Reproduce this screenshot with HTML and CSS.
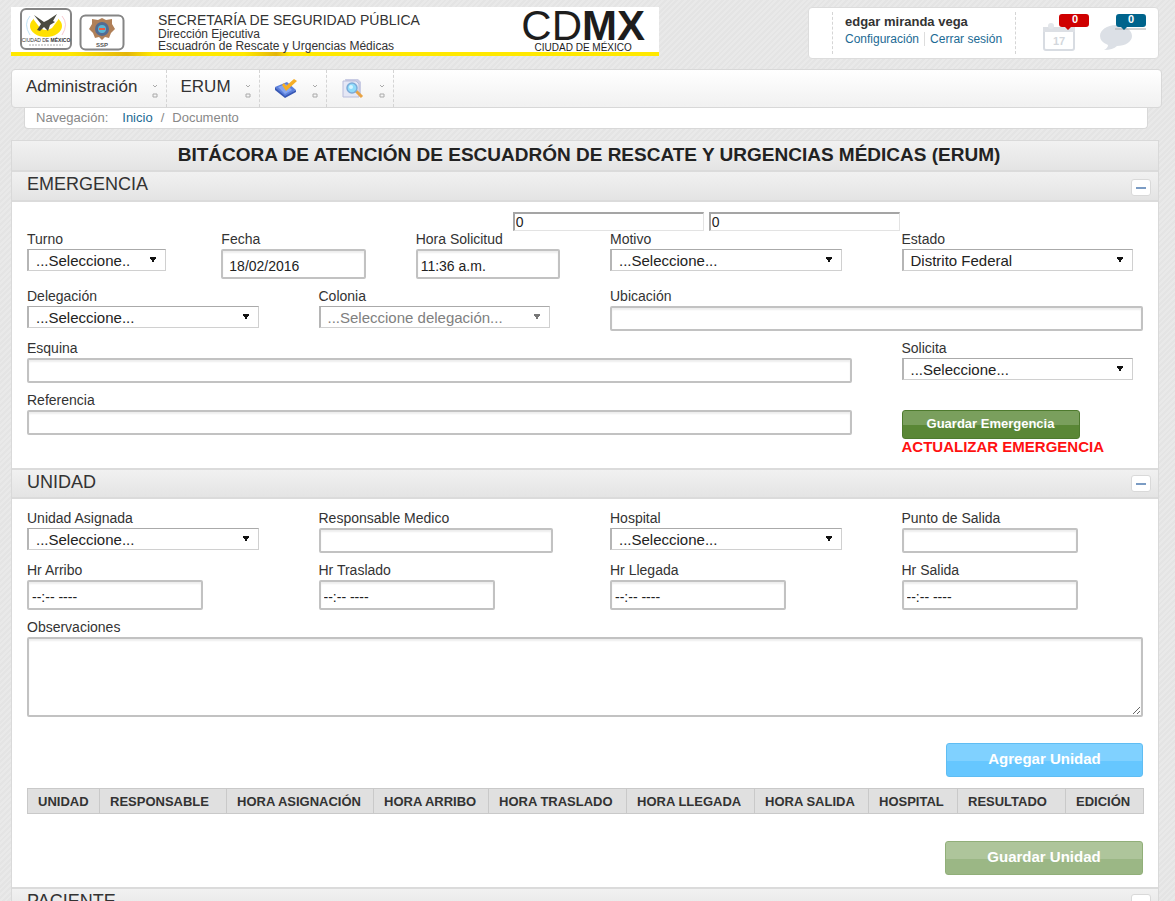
FILE: index.html
```html
<!DOCTYPE html>
<html lang="es">
<head>
<meta charset="utf-8">
<title>Bitácora de Atención ERUM</title>
<link rel="stylesheet" href="styles.css">
</head>
<body>
<header class="top">
  <div class="banner">
    <svg class="crest crest-city" viewBox="0 0 54 44" aria-hidden="true">
      <rect x="2" y="2" width="50" height="40" rx="5" fill="#fff" stroke="#858585" stroke-width="2"/>
      <path d="M11 9q-7 8 0 19" fill="none" stroke="#bfe2f5"/><path d="M43 9q7 8 0 19" fill="none" stroke="#f8c9cf"/>
      <ellipse cx="27" cy="19" rx="16" ry="11" fill="#ffe000"/>
      <path d="M15 6h24v7l-6 8q-6 4-12 0l-6-8z" fill="#fff"/>
      <path d="M15 8l10 7 4-2 9-6-4 7 2 1-5 3-2 6-4-4-4 4-3-1 4-6z" fill="#4a4a40"/>
      <text x="27" y="35" class="crest-caption">CIUDAD DE <tspan font-weight="bold">MÉXICO</tspan></text>
      <path d="M10 38h34" stroke="#aaa" stroke-dasharray="2 1"/>
    </svg>
    <svg class="crest crest-ssp" viewBox="0 0 46 37" aria-hidden="true">
      <rect x="1.500" y="1.500" width="43" height="34" rx="5" fill="#fff" stroke="#858585" stroke-width="2"/>
      <path d="M23 4l4 2 6-1v5l3 5-4 4-2 5-4-1-3 3-3-3-4 1-2-5-4-4 3-5V5l6 1z" fill="#b08058"/>
      <circle cx="23" cy="15" r="7" fill="#536b91"/><circle cx="23" cy="15" r="4" fill="#57b6d5"/><path d="M20 15h6" stroke="#e85b42" stroke-width="2"/>
      <text x="23" y="33" class="crest-ssp-caption">SSP</text>
    </svg>
    <div class="agency">
      <p class="agency-name">SECRETARÍA DE SEGURIDAD PÚBLICA</p>
      <p>Dirección Ejecutiva</p>
      <p>Escuadrón de Rescate y Urgencias Médicas</p>
    </div>
    <div class="cdmx"><span class="cdmx-big">CD<b>MX</b></span><span class="cdmx-small">CIUDAD DE MÉXICO</span></div>
  </div>
  <div class="user">
    <div class="user-info">
      <strong>edgar miranda vega</strong>
      <nav class="user-links" aria-label="Cuenta"><a href="#">Configuración</a><a href="#">Cerrar sesión</a></nav>
    </div>
    <div class="user-icons">
      <button class="alert" type="button" aria-label="Calendario">
        <svg viewBox="0 0 50 40" aria-hidden="true">
          <rect x="4" y="16" width="30" height="22" rx="2" fill="#fff" stroke="#d8dce2" stroke-width="2"/><path d="M3 15h32v5H3z" fill="#dde0e5"/><circle cx="11" cy="14" r="3" fill="#e3e6ea"/><circle cx="27" cy="14" r="3" fill="#e3e6ea"/>
          <text x="19" y="33" class="cal-day">17</text>
          <path d="M22 2h24q3 0 3 3v7q0 3-3 3H31l-3 3-3-3h-3q-3 0-3-3V5q0-3 3-3z" fill="#cf0000"/><text x="35" y="11" class="badge">0</text>
        </svg>
      </button>
      <button class="alert" type="button" aria-label="Mensajes">
        <svg viewBox="0 0 50 40" aria-hidden="true">
          <path d="M18 13c9 0 16 5 16 11s-7 10-15 10q-4 4-13 4 4-2 4-5-8-3-8-9c0-6 7-11 16-11z" fill="#dce0e6"/>
          <path d="M17 17h31" stroke="#aaa"/><path d="M21 2h24q3 0 3 3v7q0 3-3 3H29l-3 3-3-3h-2q-3 0-3-3V5q0-3 3-3z" fill="#00648c"/><text x="33" y="11" class="badge">0</text>
        </svg>
      </button>
    </div>
  </div>
</header>

<nav class="menu" aria-label="Principal">
  <a class="menu-item" href="#"><span>Administración</span><svg class="caret" viewBox="0 0 8 18" aria-hidden="true"><path d="M2 4l2 2 2-2M2 13h4v3H2z"/></svg></a>
  <a class="menu-item" href="#"><span>ERUM</span><svg class="caret" viewBox="0 0 8 18" aria-hidden="true"><path d="M2 4l2 2 2-2M2 13h4v3H2z"/></svg></a>
  <a class="menu-item" href="#" aria-label="Capturar">
    <svg class="menu-icon" viewBox="0 0 24 22" aria-hidden="true"><path d="M1 10l12-5 9 8-11 7z" fill="#5b7fdc"/><path d="M1 10v3l10 8 11-6v-2l-11 6z" fill="#3657b4"/><path d="M4 10l8-3 6 6-7 4z" fill="#86a6f0"/><path d="M8 8l4 6L23 4l-3-2-8 7-2-3z" fill="#f6ae25"/></svg>
    <svg class="caret" viewBox="0 0 8 18" aria-hidden="true"><path d="M2 4l2 2 2-2M2 13h4v3H2z"/></svg></a>
  <a class="menu-item" href="#" aria-label="Consultar">
    <svg class="menu-icon" viewBox="0 0 24 22" aria-hidden="true"><path d="M4 2h13l3 3v14H7z" fill="#c9cce4"/><path d="M2 4h13l3 3v13H2z" fill="#e5e7f5" stroke="#b9bddb"/><path d="M15 14l6 6" stroke="#e8a345" stroke-width="3"/><circle cx="11" cy="11" r="5" fill="#8fdcfb" stroke="#7cabd8" stroke-width="1.500"/><circle cx="10" cy="10" r="2" fill="#d5f5ff"/></svg>
    <svg class="caret" viewBox="0 0 8 18" aria-hidden="true"><path d="M2 4l2 2 2-2M2 13h4v3H2z"/></svg></a>
</nav>
<nav class="crumbs" aria-label="Navegación"><span>Navegación:</span><a href="#">Inicio</a><span class="slash">/</span><span>Documento</span></nav>

<main class="panel">
  <h1 class="bar title">BITÁCORA DE ATENCIÓN DE ESCUADRÓN DE RESCATE Y URGENCIAS MÉDICAS (ERUM)</h1>

  <section>
    <div class="bar"><h2>EMERGENCIA</h2><button class="toggle" type="button" aria-label="Contraer emergencia"></button></div>
    <form class="body emergency">
      <div class="grid">
        <div class="counters"><input aria-label="Latitud" value="0"><input aria-label="Longitud" value="0"></div>
      </div>
      <div class="grid">
        <div class="field s2"><label for="turno">Turno</label><select id="turno"><option>...Seleccione..</option></select></div>
        <div class="field s2"><label for="fecha">Fecha</label><input class="tall" id="fecha" value="18/02/2016"></div>
        <div class="field s2"><label for="hora">Hora Solicitud</label><input class="tall time" id="hora" value="11:36 a.m."></div>
        <div class="field s3"><label for="motivo">Motivo</label><select id="motivo"><option>...Seleccione...</option></select></div>
        <div class="field s3"><label for="estado">Estado</label><select id="estado"><option>Distrito Federal</option></select></div>
        <div class="field s3"><label for="deleg">Delegación</label><select id="deleg"><option>...Seleccione...</option></select></div>
        <div class="field s3"><label for="colonia">Colonia</label><select id="colonia" disabled><option>...Seleccione delegación...</option></select></div>
        <div class="field s6"><label for="ubic">Ubicación</label><input id="ubic"></div>
        <div class="field s9"><label for="esquina">Esquina</label><input id="esquina"></div>
        <div class="field s3"><label for="solicita">Solicita</label><select id="solicita"><option>...Seleccione...</option></select></div>
        <div class="field s9"><label for="ref">Referencia</label><input id="ref"></div>
        <div class="save s3"><button class="btn green" type="button">Guardar Emergencia</button><strong>ACTUALIZAR EMERGENCIA</strong></div>
      </div>
    </form>
  </section>

  <section>
    <div class="bar"><h2>UNIDAD</h2><button class="toggle" type="button" aria-label="Contraer unidad"></button></div>
    <form class="body unit">
      <div class="grid">
        <div class="field s3"><label for="unidad">Unidad Asignada</label><select id="unidad"><option>...Seleccione...</option></select></div>
        <div class="field s3"><label for="medico">Responsable Medico</label><input class="medium" id="medico"></div>
        <div class="field s3"><label for="hospital">Hospital</label><select id="hospital"><option>...Seleccione...</option></select></div>
        <div class="field s3"><label for="punto">Punto de Salida</label><input class="short" id="punto"></div>
        <div class="field s3"><label for="arribo">Hr Arribo</label><input class="tall short time" id="arribo" value="--:-- ----"></div>
        <div class="field s3"><label for="traslado">Hr Traslado</label><input class="tall short time" id="traslado" value="--:-- ----"></div>
        <div class="field s3"><label for="llegada">Hr Llegada</label><input class="tall short time" id="llegada" value="--:-- ----"></div>
        <div class="field s3"><label for="salida">Hr Salida</label><input class="tall short time" id="salida" value="--:-- ----"></div>
        <div class="field s12"><label for="obs">Observaciones</label><textarea id="obs"></textarea></div>
      </div>
      <div class="actions add"><button class="btn blue" type="button">Agregar Unidad</button></div>
      <table class="units">
        <colgroup><col class="c-unidad"><col class="c-resp"><col class="c-asig"><col class="c-arribo"><col class="c-tras"><col class="c-lleg"><col class="c-sal"><col class="c-hosp"><col class="c-res"><col class="c-ed"></colgroup>
        <thead><tr><th>UNIDAD</th><th>RESPONSABLE</th><th>HORA ASIGNACIÓN</th><th>HORA ARRIBO</th><th>HORA TRASLADO</th><th>HORA LLEGADA</th><th>HORA SALIDA</th><th>HOSPITAL</th><th>RESULTADO</th><th>EDICIÓN</th></tr></thead>
      </table>
      <div class="actions"><button class="btn pale" type="button">Guardar Unidad</button></div>
    </form>
  </section>

  <section>
    <div class="bar"><h2>PACIENTE</h2><button class="toggle" type="button" aria-label="Contraer paciente"></button></div>
  </section>
</main>
</body>
</html>
```
FILE: styles.css
```css
* { box-sizing: border-box; }
body {
  margin: 0;
  height: 100vh;
  overflow: hidden;
  padding: 7px 16px 0 11px;
  font-family: "Liberation Sans", Arial, sans-serif;
  font-size: 14px;
  color: #333;
  background: repeating-linear-gradient(135deg, #e9e9e9 0 2px, #e4e4e4 2px 4px);
}
h1, h2, p { margin: 0; }
a { color: #1b6a94; text-decoration: none; }
button, input, select, textarea { font: inherit; color: #222; }

/* Header */
.top { display: flex; justify-content: space-between; align-items: flex-start; }
.banner {
  display: flex;
  width: 648px;
  height: 49px;
  padding: 0 14px 0 8px;
  background: #fff;
  border-bottom: 4px solid;
  border-image: linear-gradient(90deg, #ffe800 9%, #e3b50a 18%, #ffe800 22%, #ffe800 36%, #e3b50a 41%, #ffe800 43%) 1;
}
.crest { flex: none; }
.crest-city { width: 54px; height: 44px; }
.crest-ssp { width: 46px; height: 37px; margin: 7px 0 0 6px; }
.crest-caption { font-size: 5px; text-anchor: middle; fill: #333; }
.crest-ssp-caption { font-size: 6px; font-weight: bold; text-anchor: middle; fill: #555; }
.agency { flex: 1; padding: 6px 0 0 33px; font-size: 12px; line-height: 12px; white-space: nowrap; }
.agency-name { font-size: 14px; line-height: 15px; }
.cdmx { display: flex; flex-direction: column; align-items: center; color: #1d1d1d; }
.cdmx-big { font-size: 42px; line-height: 35px; padding-top: 1px; }
.cdmx-small { font-size: 10px; line-height: 9px; }
.user {
  display: flex;
  align-items: center;
  width: 351px;
  height: 52px;
  padding-left: 23px;
  background: #fff;
  border: 1px solid #dcdcdc;
  border-radius: 4px;
}
.user-info {
  display: flex;
  flex-direction: column;
  gap: 3px;
  width: 184px;
  height: 42px;
  padding: 2px 0 0 12px;
  border: dashed #d5d5d5;
  border-width: 0 1px;
  font-size: 13px;
}
.user-links { display: flex; font-size: 12px; white-space: nowrap; }
.user-links a + a { margin-left: 5px; padding-left: 5px; border-left: 1px solid #ddd; }
.user-icons { display: flex; gap: 8px; padding: 0 0 2px 24px; }
.alert { width: 50px; height: 40px; padding: 0; border: 0; background: none; }
.alert svg { display: block; }
.cal-day { font-size: 11px; font-weight: bold; text-anchor: middle; fill: #d3d7dc; }
.badge { font-size: 11px; font-weight: bold; text-anchor: middle; fill: #fff; }

/* Menu and breadcrumb */
.menu {
  display: flex;
  height: 39px;
  margin: 10px -3px 0 0;
  border: 1px solid #d8d8d8;
  border-radius: 4px;
  background: linear-gradient(#fff, #f1f1f1);
}
.menu-item {
  display: flex;
  justify-content: space-between;
  padding: 7px 7px 0 14px;
  border-right: 1px dashed #d4d4d4;
  color: #333;
  font-size: 17px;
  line-height: 19px;
}
.menu-icon { width: 24px; height: 22px; }
.caret { width: 8px; height: 18px; margin: 4px 0 0 13px; fill: none; stroke: #aaa; }
.crumbs {
  display: flex;
  height: 21px;
  margin: 0 11px 0 13px;
  padding: 1px 11px;
  background: #fff;
  border: 1px solid #d8d8d8;
  border-top: 0;
  border-radius: 0 0 4px 4px;
  color: #888;
  font-size: 13px;
  line-height: 17px;
}
.crumbs a { margin-left: 14px; }
.slash { margin: 0 8px; }

/* Panel */
.panel { margin-top: 11px; background: #fff; border: 1px solid #d9d9d9; }
.bar {
  display: flex;
  justify-content: space-between;
  height: 30px;
  padding: 0 7px 0 15px;
  background: linear-gradient(#f1f1f1, #e4e4e4);
  border-bottom: 2px solid #dbdbdb;
}
.bar h2 { font-size: 18px; font-weight: normal; line-height: 25px; }
.title { height: 31px; justify-content: center; font-size: 19px; line-height: 27px; color: #222; white-space: nowrap; }
section + section .bar { height: 31px; border-top: 2px solid #dbdbdb; }
section + section h2 { line-height: 23px; }
.toggle {
  display: flex;
  align-items: center;
  justify-content: center;
  width: 20px;
  height: 17px;
  margin-top: 7px;
  padding: 0;
  background: #fff;
  border: 1px solid #d9d9d9;
  border-radius: 3px;
}
section + section .toggle { margin-top: 5px; }
.toggle::before { content: ""; width: 10px; height: 2px; background: #7b9cc4; }
.body { padding: 0 15px; }
.emergency { padding-top: 10px; padding-bottom: 13px; }
.unit { padding-top: 12px; padding-bottom: 12px; }
.grid { display: grid; grid-template-columns: repeat(12, minmax(0, 1fr)); gap: 10px 50px; align-items: start; }
.s2 { grid-column: span 2; }
.s3 { grid-column: span 3; }
.s6 { grid-column: span 6; }
.s9 { grid-column: span 9; }
.s12 { grid-column: span 12; }
.counters { grid-column: 6 / span 5; display: flex; gap: 5px; margin-bottom: 1px; }
.counters input {
  width: 191px;
  height: 19px;
  padding: 0 1px;
  border: 1px solid #e3e3e3;
  border-top: 2px solid #a5a5a5;
  border-left: 2px solid #a5a5a5;
}
.field { display: flex; flex-direction: column; align-items: flex-start; }
.field label { margin-bottom: 3px; line-height: 14px; }
.field input, .field textarea {
  width: 100%;
  height: 25px;
  padding: 3px 6px 0;
  background: #fff;
  border: 2px solid #c2c2c2;
  border-radius: 2px;
  box-shadow: inset 0 2px 2px #eee;
}
.field .tall { height: 30px; }
.field .time { padding-left: 3px; }
.field .short { width: 73%; }
.field .medium { width: 97%; }
.field textarea { display: block; height: 80px; }
.field select {
  width: 96%;
  height: 22px;
  padding: 0 15px 0 7px;
  border: 1px solid #d0d0d0;
  border-top-color: #aaa;
  border-left: 2px solid #b5b5b5;
  border-radius: 0;
  appearance: none;
  font-size: 15px;
  background: conic-gradient(from -30deg at 50% 100%, #111 60deg, transparent 0) right 8px top 7px / 8px 6px no-repeat, #fff;
}
.field select:disabled { color: #808080; opacity: 1; background-image: conic-gradient(from -30deg at 50% 100%, #777 60deg, transparent 0); }

/* Buttons */
.save { display: flex; flex-direction: column; align-items: flex-start; padding-top: 17px; color: #f11; white-space: nowrap; }
.save strong { font-size: 15px; line-height: 16px; }
.btn { padding: 0 0 3px; border: 1px solid; border-radius: 3px; color: #fff; font-weight: bold; text-align: center; }
.green { width: 178px; height: 29px; font-size: 13px; border-color: #4e7a2e; background: linear-gradient(#7a9f5d 52%, #5a8736 52%); }
.blue { width: 197px; height: 34px; font-size: 15px; border-color: #5fbdf3; background: linear-gradient(#80d1ff 52%, #66c7ff 52%); }
.pale { width: 198px; height: 34px; font-size: 15px; border-color: #91af79; background: linear-gradient(#aec59b 52%, #9bb785 52%); }
.actions { display: flex; justify-content: flex-end; padding-top: 27px; }
.add { padding: 26px 0 11px; }

/* Units table */
.units { width: 100%; table-layout: fixed; border-collapse: collapse; }
.units th {
  height: 25px;
  padding: 0 0 0 10px;
  background: #e0e0e0;
  border: 1px solid #c9c9c9;
  font-size: 13px;
  text-align: left;
  white-space: nowrap;
}
.c-unidad { width: 72px; }
.c-resp { width: 127px; }
.c-asig { width: 147px; }
.c-arribo { width: 115px; }
.c-tras { width: 138px; }
.c-lleg { width: 128px; }
.c-sal { width: 114px; }
.c-hosp { width: 89px; }
.c-res { width: 108px; }
.c-ed { width: 78px; }
```
